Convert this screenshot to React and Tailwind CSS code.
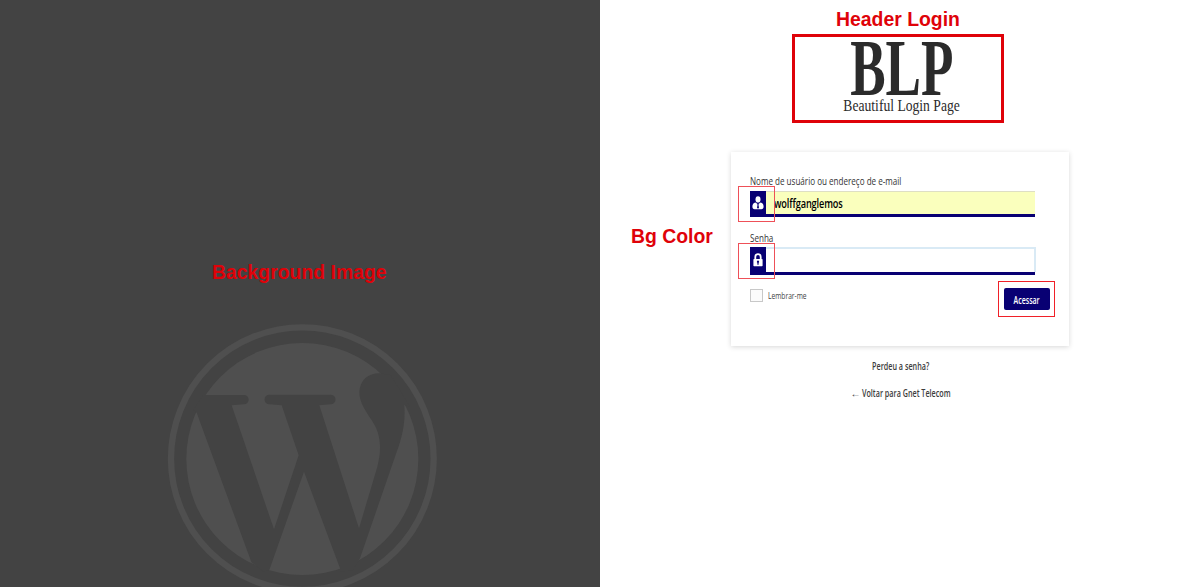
import { clsx } from "clsx";

function Label({ children, className, origin = "origin-left" }) {
  return (
    <span className={clsx("block w-max whitespace-nowrap font-['Open_Sans',sans-serif] leading-4", origin, className)}>
      {children}
    </span>
  );
}

function Note({ children, className }) {
  return (
    <span className={clsx("absolute whitespace-nowrap font-['Liberation_Sans',sans-serif] text-[19.4px] leading-[22px] font-bold text-[#df0209]", className)}>
      {children}
    </span>
  );
}

function Outline({ className }) {
  return <div className={clsx("absolute", className)} />;
}

function WordPressMark() {
  return (
    <svg viewBox="0 0 900 831" className="ml-[150px] h-[277px] w-[300px]">
      <circle cx="457" cy="446" r="394" fill="none" stroke="#4f4f4f" strokeWidth="19" />
      <circle cx="457" cy="447" r="348" fill="#4f4f4f" />
      <path
        fill="#434343"
        d="M160 255H282A14 14 0 0 1 282 283L245 286L372 658L446 436L395 286L358 283A14 14 0 0 1 358 254H542A14 14 0 0 1 542 283L508 286L627 655L682 470C694 425 694 378 672 342C652 308 628 282 628 246C630 210 655 190 688 190L722 195L780 290L763 285C768 350 750 400 735 440L630 745L608 780L573 785L570 775L462 485L358 780L340 785L304 756L140 308L130 300Z"
      />
    </svg>
  );
}

function UserIcon() {
  return (
    <svg viewBox="0 0 12 14" className="mb-[3px] h-[14px] w-3">
      <ellipse cx="6" cy="3.4" rx="2.5" ry="3.1" fill="#fff" />
      <path fill="#fff" d="M3.4 6.500 6 8.300l2.600-1.800c2.200.5 3 2 3 4.100 0 1.900-.8 2.600-2.200 2.600H2.600C1.200 13.200.4 12.500.4 10.600c0-2.100.8-3.600 3-4.100Z" />
      <path fill="#080073" d="m5.300 8 .7-.2.7.2-.2 1.100.5 2.600-1 1-1-1 .5-2.600Z" />
    </svg>
  );
}

function LockIcon() {
  return (
    <svg viewBox="0 0 10 14" className="mb-[2px] h-[14px] w-[10px]">
      <path fill="none" stroke="#fff" strokeWidth="1.800" d="M2.300 6.500V4a2.700 2.800 0 0 1 5.400 0v2.500" />
      <rect x="0.400" y="6" width="9.200" height="7.200" rx="0.700" fill="#fff" />
      <path fill="#080073" d="M5 7.600a1.200 1.200 0 0 1 .6 2.200v1.900H4.400V9.800A1.200 1.200 0 0 1 5 7.600Z" />
    </svg>
  );
}

function LoginCard() {
  return (
    <div className="mt-[29px] ml-[131px] h-[194px] w-[338px] bg-white pt-[21px] pl-[19px] shadow-[0_1px_5px_rgba(0,0,0,0.16)]">
      <Label className="scale-x-[0.734] text-[11px] font-medium text-[#333]">Nome de usuário ou endereço de e-mail</Label>
      <div className="mt-[2px] flex h-[26px] w-[285px] border-b-[3px] border-[#080073] bg-[#faffbd]">
        <div className="flex h-[26px] w-4 shrink-0 items-center justify-center bg-[#080073]"><UserIcon /></div>
        <div className="flex flex-1 items-center border-t border-[#dedfc4] pl-2">
          <Label className="scale-x-[0.765] pt-px text-[12px] font-semibold tracking-[-0.15px] text-black">wolffganglemos</Label>
        </div>
      </div>
      <Label className="mt-[13px] scale-x-[0.734] text-[11px] font-medium text-[#333]">Senha</Label>
      <div className="mt-[1px] flex h-[28px] w-[285px] border-b-[3px] border-[#080073] bg-white">
        <div className="flex h-[28px] w-4 shrink-0 items-center justify-center bg-[#080073]"><LockIcon /></div>
        <div className="mr-[-1px] flex-1 border-t-2 border-r-2 border-[#d9eaf5]" />
      </div>
      <div className="mt-[13px] flex">
        <div className="mt-px h-[13px] w-[13px] border border-[#c8c8c8] bg-[#fbfbfb]" />
        <Label className="ml-[5px] scale-x-[0.7] text-[9.5px] font-medium text-[#444]">Lembrar-me</Label>
        <button className="mr-[19px] ml-auto flex h-[22px] w-[46px] items-center justify-center rounded-[2px] bg-[#080073]">
          <Label origin="origin-center" className="scale-x-[0.7] pt-px text-[10px] font-semibold text-white">Acessar</Label>
        </button>
      </div>
    </div>
  );
}

export default function App() {
  return (
    <main className="relative flex h-[587px] w-[1200px] overflow-hidden bg-white">
      <section className="flex w-[600px] items-end bg-[#434343]">
        <WordPressMark />
      </section>
      <section className="w-[600px] pt-[34px]">
        <header className="ml-[192px] flex h-[89px] w-[212px] flex-col items-center border-[3px] border-[#df0209] pl-[7px] font-['Liberation_Serif',serif] text-[#2b2b2b]">
          <span className="mt-[-4px] h-[64px] w-max scale-x-[0.655] text-[81px] leading-[70px] font-bold">BLP</span>
          <span className="w-max scale-x-[0.825] text-[16.5px] leading-[18px] whitespace-nowrap">Beautiful Login Page</span>
        </header>
        <LoginCard />
        <nav className="flex flex-col items-center gap-[11px] pt-[12px] pl-px">
          <Label origin="origin-center" className="scale-x-[0.72] text-[10px] font-semibold text-[#3c3c3c]">Perdeu a senha?</Label>
          <Label origin="origin-center" className="flex scale-x-[0.72] items-center gap-[3px] text-[10px] font-semibold text-[#3c3c3c]">
            <span className="inline-block origin-left scale-x-[1.4] pr-[3px] font-normal">←</span>
            Voltar para Gnet Telecom
          </Label>
        </nav>
      </section>
      <Note className="top-[261px] left-[212px]">Background Image</Note>
      <Note className="top-[8px] left-[836px]">Header Login</Note>
      <Note className="top-[225px] left-[631px]">Bg Color</Note>
      <Outline className="top-[186px] left-[738px] h-[36px] w-[37px] border border-[#ee5058]" />
      <Outline className="top-[243px] left-[738px] h-[36px] w-[37px] border border-[#ee5058]" />
      <Outline className="top-[281px] left-[998px] h-[36px] w-[57px] border border-[#f02028]" />
    </main>
  );
}
